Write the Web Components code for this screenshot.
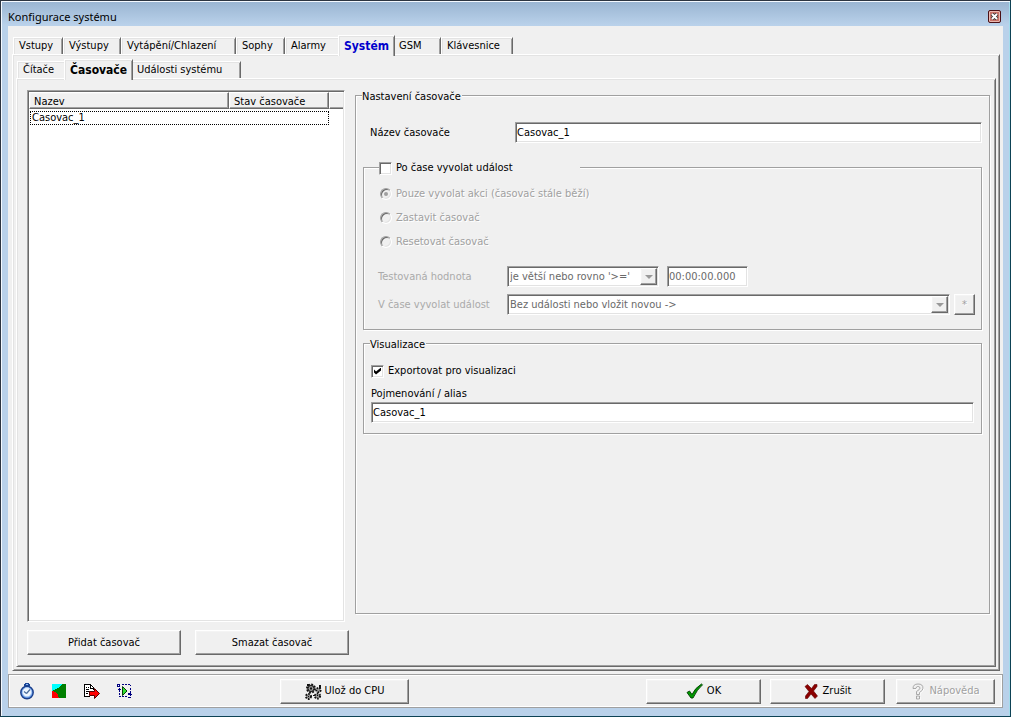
<!DOCTYPE html>
<html lang="cs">
<head>
<meta charset="utf-8">
<title>Konfigurace systému</title>
<style>
  html, body { margin: 0; height: 100%; }
  body {
    --face: #f0f0f0; --shadow: #a0a0a0; --dark: #696969; --light: #e3e3e3;
    font: 11px/14px "DejaVu Sans Condensed", "DejaVu Sans", sans-serif;
    color: #000;
  }
  .columns { display: flex; gap: 6px; flex: 1; min-height: 0; }
  .side { display: flex; flex-direction: column; gap: 8px; width: 322px; flex: none; padding-top: 1px; box-sizing: border-box; }
  .side list-view { flex: 1; width: 318px; }
  .pair { display: flex; gap: 14px; }
  .pair push-button { flex: 1; }
  .settings { flex: 1; margin-bottom: 41px; min-width: 0; }
  .main-form { display: flex; flex-direction: column; padding-top: 20px; }
  .main-form > text-field { margin-left: 7px; --label-width: 145px; }
  .event { margin-top: 18px; --legend-indent: 15px; --legend-width: 201px; }
  .event-form { display: flex; flex-direction: column; padding: 8px 0 14px 7px; margin-right: -1px; --label-width: 129px; }
  .line { display: flex; }
  .line.first { margin: 12px 0 7px; gap: 8px; }
  .line.second { gap: 4px; }
  .line.second choice-box { flex: 1; }
  .line.second push-button { width: 21px; --button-height: 21px; }
  .time { width: 81px; --label-width: 0px; }
  .first choice-box { width: 281px; }
  .export { margin-top: 7px; }
  .export-form { display: flex; flex-direction: column; padding: 14px 0 10px; }
  .export-form text-field { margin-top: 9px; }
  .tools { display: flex; gap: 16px; width: 261px; }
  .answers { display: flex; gap: 9px; margin-left: auto; }
  .answers push-button { width: 115px; }
  .answers push-button:last-child { width: 99px; margin-left: 2px; }
  .save { width: 129px; }
</style>
</head>
<body>
<app-window caption="Konfigurace systému">
  <tab-control>
    <tab-item slot="tab" width="50">Vstupy</tab-item>
    <tab-item slot="tab" width="58">Výstupy</tab-item>
    <tab-item slot="tab" width="115">Vytápění/Chlazení</tab-item>
    <tab-item slot="tab" width="49">Sophy</tab-item>
    <tab-item slot="tab" width="55">Alarmy</tab-item>
    <tab-item slot="tab" width="53" selected style="color:#00c">Systém</tab-item>
    <tab-item slot="tab" width="48">GSM</tab-item>
    <tab-item slot="tab" width="72">Klávesnice</tab-item>
    <tab-control style="--page-padding: 9px 4px 10px 9px">
      <tab-item slot="tab" width="49">Čítače</tab-item>
      <tab-item slot="tab" width="65" selected>Časovače</tab-item>
      <tab-item slot="tab" width="110">Události systému</tab-item>
      <div class="columns">
        <div class="side">
          <list-view columns="Nazev|Stav časovače" rows="Casovac_1"></list-view>
          <div class="pair">
            <push-button>Přidat časovač</push-button>
            <push-button>Smazat časovač</push-button>
          </div>
        </div>
        <group-box class="settings">
          <span slot="legend">Nastavení časovače</span>
          <div class="main-form">
            <text-field label="Název časovače" value="Casovac_1"></text-field>
            <group-box class="event">
              <check-option slot="legend" label="Po čase vyvolat událost"></check-option>
              <div class="event-form">
                <radio-options options="Pouze vyvolat akci (časovač stále běží)|Zastavit časovač|Resetovat časovač"></radio-options>
                <div class="line first">
                  <choice-box label="Testovaná hodnota" value="je větší nebo rovno '&gt;='"></choice-box>
                  <text-field class="time" hint="Čas" value="00:00:00.000" disabled></text-field>
                </div>
                <div class="line second">
                  <choice-box label="V čase vyvolat událost" value="Bez události nebo vložit novou -&gt;"></choice-box>
                  <push-button disabled>*</push-button>
                </div>
              </div>
            </group-box>
            <group-box class="export">
              <span slot="legend">Visualizace</span>
              <div class="export-form">
                <check-option label="Exportovat pro visualizaci" checked></check-option>
                <text-field stacked label="Pojmenování / alias" value="Casovac_1"></text-field>
              </div>
            </group-box>
          </div>
        </group-box>
      </div>
    </tab-control>
  </tab-control>
  <div slot="footer" class="tools">
    <icon-glyph name="watch"></icon-glyph>
    <icon-glyph name="flag"></icon-glyph>
    <icon-glyph name="export"></icon-glyph>
    <icon-glyph name="run"></icon-glyph>
  </div>
  <push-button slot="footer" class="save" icon="gears">Ulož do CPU</push-button>
  <div slot="footer" class="answers">
    <push-button icon="ok">OK</push-button>
    <push-button icon="cancel">Zrušit</push-button>
    <push-button icon="help" disabled>Nápověda</push-button>
  </div>
</app-window>

<script>
const esc = s => (s || "").replace(/&/g, "&amp;").replace(/</g, "&lt;").replace(/>/g, "&gt;").replace(/"/g, "&quot;");

class Part extends HTMLElement {
  connectedCallback() {
    if (this.shadowRoot) return;
    this.attachShadow({ mode: "open" }).innerHTML = this.render();
  }
  attr(name) { return esc(this.getAttribute(name)); }
  flag(name) { return this.hasAttribute(name) ? name : ""; }
}

// Sunken field look shared by edits and drop-downs.
const sunken = `
  box-sizing: border-box; height: 21px; background: #fff; border: 1px solid;
  border-color: var(--shadow) #fff #fff var(--shadow);
  box-shadow: inset 1px 1px 0 var(--dark), inset -1px -1px 0 var(--light);`;
const raised = `
  background: var(--face); border: 1px solid; border-color: #fff var(--dark) var(--dark) #fff;
  box-shadow: inset -1px -1px 0 var(--shadow), inset 1px 1px 0 #f4f4f4;`;

const icons = {
  watch: [16, `<path d="M6 0h4v1H6zM5 1h6v2H5z" fill="#1b4697"/><path d="M7 1h2v1H7z" fill="#8eb9f4"/>
    <circle cx="8" cy="9.5" r="6.200" fill="#5c92e0" stroke="#1a3f8c" stroke-width="1.400"/>
    <circle cx="8" cy="9.2" r="4.6" fill="#eef6ff" stroke="#a8c8f4" stroke-width=".8"/>
    <path d="M7.500 10.500 11 6.500M5 8.500l2.500 2" fill="none" stroke="#4b6d9c" stroke-width="1.200"/>`],
  flag: [16, `<g shape-rendering="crispEdges"><path d="M1 1h14v14H1z" fill="#008000"/>
    <path d="M1 1h10L9 4 1 8z" fill="#00ffff"/>
    <path d="M1 8l3 1 3 3 1 3H1z" fill="#ff0000"/></g>`],
  export: [17, `<g shape-rendering="crispEdges"><path d="M1 1h7l3 3v10H1z" fill="#fff"/>
    <path d="M1 1h7v1H2v11h5v1H1zM8 2h1v1H8zM9 3h1v1H9zM10 4h1v3h-1zM7 2h1v3h3v1H7zM3 4h1v1H3zM5 4h1v1H5zM3 6h3v1H3zM3 8h3v1H3zM3 10h2v1H3zM5 8h2v1H5z" fill="#000"/></g>
    <path d="M6.500 8.500h5v-3l5 5-5 5v-3h-5z" fill="#f00" stroke="#500" stroke-width="1"/>`],
  run: [16, `<g shape-rendering="crispEdges" fill="#000080"><path d="M1 1h3v3H1zM6 1h2v1H6zM9 1h2v1H9zM12 1h2v1h-2zM14 2h1v1h-1zM14 5h1v2h-1zM14 8h1v2h-1zM12 10h3v1h1v1h-1v1h-1v-1h-2zM2 6h1v-1h1v1h1v1H4v2H3V7H2zM3 10h1v2H3zM3 13h2v1H3zM6 13h2v1H6zM9 13h2v1H9zM12 14h3v1h-3z"/><path d="M2 2h1v1H2z" fill="#fff"/></g>
    <path d="M6.500 3.500v9l4.500-4.500z" fill="#30e030" stroke="#064006"/>`],
  gears: [16, `<g fill="#999" stroke="#111"><circle cx="6" cy="5.500" r="4" stroke-width="2" stroke-dasharray="1.800 1.300"/><circle cx="6" cy="5.500" r="3" stroke-width="1"/>
    <circle cx="13.500" cy="7" r="2.200" stroke-width="1.800" stroke-dasharray="1.500 1"/><circle cx="3.500" cy="13.500" r="2.500" stroke-width="2" stroke-dasharray="1.600 1.200"/>
    <circle cx="12.500" cy="13" r="2.600" stroke-width="2" stroke-dasharray="1.600 1.200"/></g><path d="M5 4.500h2v2H5zM2 1h2v2H2zM14 2h2v3h-2zM8 12h2v1H8zM3 13h1v1H3zM12 12h1v1h-1z" fill="#111"/>`],
  ok: [17, `<path d="M1 9.500 3.500 8 6 11.500Q9 5 15.500 1l1 .8Q11 6.500 7 15H5z" fill="#009a00" stroke="#003c00" stroke-width=".9"/>`],
  cancel: [15, `<path d="M1 3.500 3.500 1.500 7.500 5.500 10.500 1.500h2.500v2L9.500 8l4 5-2.500 2.500L7 11l-3.500 4.500H1.500V13L5 8.500z" fill="#8b0000" stroke="#600000" stroke-width=".6"/>`],
  help: [14, `<path d="M2 5.500Q2 1 7 1t5 4.200Q12 7.500 8.500 9.500V11.500H5.500V8.500Q9 6.500 9 5.200 9 3.500 7 3.500T5 5.500zM5.500 13h3v3h-3z" transform="translate(1 1)" fill="#fff"/>
    <path d="M2 5.500Q2 1 7 1t5 4.200Q12 7.500 8.500 9.500V11.500H5.500V8.500Q9 6.500 9 5.200 9 3.500 7 3.500T5 5.500zM5.500 13h3v3h-3z" fill="#f0f0f0" stroke="#a0a0a0" stroke-width=".9"/>`]
};

customElements.define("icon-glyph", class extends Part {
  render() {
    const [w, art] = icons[this.getAttribute("name")];
    return `<style>:host{display:block;width:${w}px;height:17px;flex:none}svg{display:block;overflow:visible}</style>
      <svg width="${w}" height="17" viewBox="0 0 ${w} 17" aria-hidden="true">${art}</svg>`;
  }
});

customElements.define("app-window", class extends Part {
  render() {
    return `<style>
      :host { display: flex; flex-direction: column; box-sizing: border-box; min-height: 100vh; padding: 1px 7px 8px 6px;
        border: 1px solid; border-color: #2c3440 #0d4255 #0d4255 #2c3440;
        box-shadow: inset 1px 1px 0 #f4f9ff, inset -1px 0 0 #a4dcec;
        background: linear-gradient(#99b4d1, #b9d1ea 24px) no-repeat #b9d1ea; }
      header { display: flex; align-items: center; justify-content: space-between; height: 24px; padding: 0 2px 0 1px; }
      h1 { margin: 0; padding-top: 6px; font: 11px/18px "Noto Sans", sans-serif; }
      header button { width: 13px; height: 13px; padding: 0; margin-top: 5px; border: 1px solid #4a1015; border-radius: 2px; background: #c87066; box-shadow: inset 0 0 0 1px #eab8b0; }
      header svg { display: block; margin: 1px; }
      main { display: flex; flex-direction: column; flex: 1; background: var(--face); padding: 9px 3px 0 4px; margin: 0 0 0 1px; }
      footer { display: flex; align-items: center; height: 32px; margin: 3px -3px 0 -4px; padding: 0 7px 0 10px; border: 1px solid var(--shadow); box-shadow: inset 1px 1px 0 #fff, inset -1px -1px 0 #fff; }
      ::slotted(tab-control) { flex: 1; }
    </style>
    <header><h1>${this.attr("caption")}</h1><button aria-label="Zavřít"><svg width="9" height="9" viewBox="0 0 9 9"><path d="M2 2l5 5M7 2l-5 5" stroke="#333" stroke-width="3.600"/><path d="M2 2l5 5M7 2l-5 5" stroke="#fff" stroke-width="2"/></svg></button></header>
    <main><slot></slot><footer><slot name="footer"></slot></footer></main>`;
  }
});

customElements.define("tab-control", class extends Part {
  render() {
    return `<style>
      :host { display: flex; flex-direction: column; flex: 1; }
      nav { display: flex; align-items: flex-end; height: 19px; padding-left: 1px; }
      section { display: flex; flex-direction: column; flex: 1; padding: 1px;
        border: 1px solid; border-color: #fff var(--dark) var(--dark) #fff;
        box-shadow: inset 1px 1px 0 var(--light), inset -1px -1px 0 var(--shadow); }
      .page { display: flex; flex-direction: column; flex: 1; padding: var(--page-padding, 3px 2px 2px); }
    </style>
    <nav role="tablist"><slot name="tab"></slot></nav>
    <section><div class="page"><slot></slot></div></section>`;
  }
});

customElements.define("tab-item", class extends Part {
  render() {
    const on = this.hasAttribute("selected");
    return `<style>
      :host { display: block; width: ${+this.getAttribute("width")}px; height: 17px; flex: none; }
      :host([selected]) { height: 19px; position: relative; z-index: 1; }
      button { display: block; box-sizing: border-box; width: 100%; height: 100%; margin: 0; padding: 0 0 0 5px; text-align: left; white-space: nowrap;
        font: inherit; color: inherit; background: var(--face); border: 1px solid; border-color: #fff var(--dark) transparent #fff; border-bottom: 0;
        box-shadow: inset 1px 1px 0 var(--light), inset -1px 0 0 var(--shadow); }
      :host([selected]) button { width: calc(100% + 4px); height: 21px; margin-left: -2px; font-size: 12px; font-weight: bold; }
    </style><button role="tab" aria-selected="${on}"><slot></slot></button>`;
  }
});

customElements.define("push-button", class extends Part {
  render() {
    const icon = this.getAttribute("icon");
    return `<style>
      :host { display: block; flex: none; }
      button { ${raised} display: flex; align-items: center; justify-content: center; gap: 4px; box-sizing: border-box; width: 100%;
        height: var(--button-height, 25px); margin: 0; padding: 0; font: inherit; color: #000; white-space: nowrap; }
      button:disabled { color: var(--shadow); text-shadow: 1px 1px 0 #fff; }
    </style><button ${this.flag("disabled")}>${icon ? `<icon-glyph name="${icon}"></icon-glyph>` : ""}<slot></slot></button>`;
  }
});

customElements.define("list-view", class extends Part {
  render() {
    const cols = this.getAttribute("columns").split("|"), rows = this.getAttribute("rows").split("|");
    return `<style>
      :host { ${sunken} display: block; height: auto; padding: 1px; }
      table { width: 100%; table-layout: fixed; border-collapse: separate; border-spacing: 0; }
      col:nth-child(1) { width: 200px; } col:nth-child(2) { width: 100px; }
      th { ${raised} box-sizing: border-box; height: 17px; padding: 1px 0 0 4px; font-weight: normal; text-align: left; line-height: 13px; }
      th:last-child { border-right: 0; box-shadow: inset 0 -1px 0 var(--shadow); }
      td { padding: 2px 0 0 1px; }
      td span { display: block; border: 1px dotted #000; line-height: 12px; padding-left: 1px; }
    </style>
    <table><colgroup><col><col><col></colgroup>
      <thead><tr>${cols.map(c => `<th scope="col">${esc(c)}</th>`).join("")}<th></th></tr></thead>
      <tbody>${rows.map(r => `<tr><td colspan="2"><span>${esc(r)}</span></td><td></td></tr>`).join("")}</tbody>
    </table>`;
  }
});

customElements.define("group-box", class extends Part {
  render() {
    return `<style>
      :host { display: flex; flex-direction: column; }
      fieldset { flex: 1; box-sizing: border-box; min-width: 0; margin: 0; padding: 0 7px; border: 1px solid var(--shadow); box-shadow: 1px 1px 0 #fff, inset 1px 1px 0 #fff; }
      legend { box-sizing: border-box; height: 13px; line-height: 16px; width: var(--legend-width, auto); padding: 0 1px 0 0; margin-left: calc(var(--legend-indent, 6px) - 7px); background: var(--face); }
      .body { --legend-indent: 6px; --legend-width: auto; }
    </style>
    <fieldset><legend><slot name="legend"></slot></legend><div class="body"><slot></slot></div></fieldset>`;
  }
});

customElements.define("text-field", class extends Part {
  render() {
    const label = this.attr("label");
    return `<style>
      :host { display: block; }
      label { display: grid; grid-template-columns: var(--label-width, 0px) 1fr; align-items: center; }
      :host([stacked]) label { display: flex; flex-direction: column; align-items: stretch; gap: 1px; }
      input { ${sunken} width: 100%; min-width: 0; margin: 0; padding: 0 2px 1px 1px; font: inherit; color: #000; border-radius: 0; grid-column: 2; }
      input:disabled { color: var(--dark); }
    </style><label>${label ? `<span>${label}</span>` : ""}<input type="text" value="${this.attr("value")}" ${this.flag("disabled")} ${label ? "" : `aria-label="${this.attr("hint")}"`}></label>`;
  }
});

customElements.define("choice-box", class extends Part {
  render() {
    return `<style>
      :host { display: block; }
      label { display: grid; grid-template-columns: var(--label-width) 1fr; align-items: center; color: #aaa; }
      .box { ${sunken} display: flex; padding: 1px; position: relative; }
      select { appearance: none; flex: 1; min-width: 0; border: 0; margin: 0; padding: 1px 18px 0 1px; background: none; font: inherit; color: var(--dark); opacity: 1; }
      i { ${raised} position: absolute; right: 1px; top: 1px; bottom: 1px; width: 15px; display: grid; place-items: center; pointer-events: none; }
      i::after { content: ""; border: 4px solid transparent; border-top-color: #999; border-bottom: 0; }
    </style><label><span>${this.attr("label")}</span><span class="box"><select disabled><option>${this.attr("value")}</option></select><i></i></span></label>`;
  }
});

customElements.define("check-option", class extends Part {
  render() {
    return `<style>
      :host { display: block; }
      label { display: flex; align-items: center; gap: 4px; height: 14px; line-height: 14px; }
      input { ${sunken} appearance: none; display: grid; width: 13px; height: 13px; margin: 0; flex: none; }
      input:checked::before { content: ""; width: 7px; height: 7px; margin: 2px; background: #000; clip-path: polygon(0 29%, 29% 57%, 100% 0, 100% 43%, 29% 100%, 0 71%); }
    </style><label><input type="checkbox" ${this.flag("checked")}><span>${this.attr("label")}</span></label>`;
  }
});

customElements.define("radio-options", class extends Part {
  render() {
    return `<style>
      :host { display: block; }
      label { display: flex; align-items: center; gap: 4px; height: 24px; padding-left: 2px; color: var(--shadow); text-shadow: 1px 1px 0 #fff; }
      input { appearance: none; display: grid; place-items: center; box-sizing: border-box; width: 12px; height: 12px; margin: 0; border-radius: 50%; border: 1px solid;
        border-color: var(--shadow) #fff #fff var(--shadow); box-shadow: inset 1px 1px 0 var(--dark), inset -1px -1px 0 var(--light); background: var(--face); }
      input:checked::before { content: ""; width: 4px; height: 4px; border-radius: 50%; background: var(--shadow); }
    </style>${this.getAttribute("options").split("|").map((o, i) => `<label><input type="radio" name="action" disabled ${i ? "" : "checked"}><span>${esc(o)}</span></label>`).join("")}`;
  }
});
</script>
</body>
</html>
